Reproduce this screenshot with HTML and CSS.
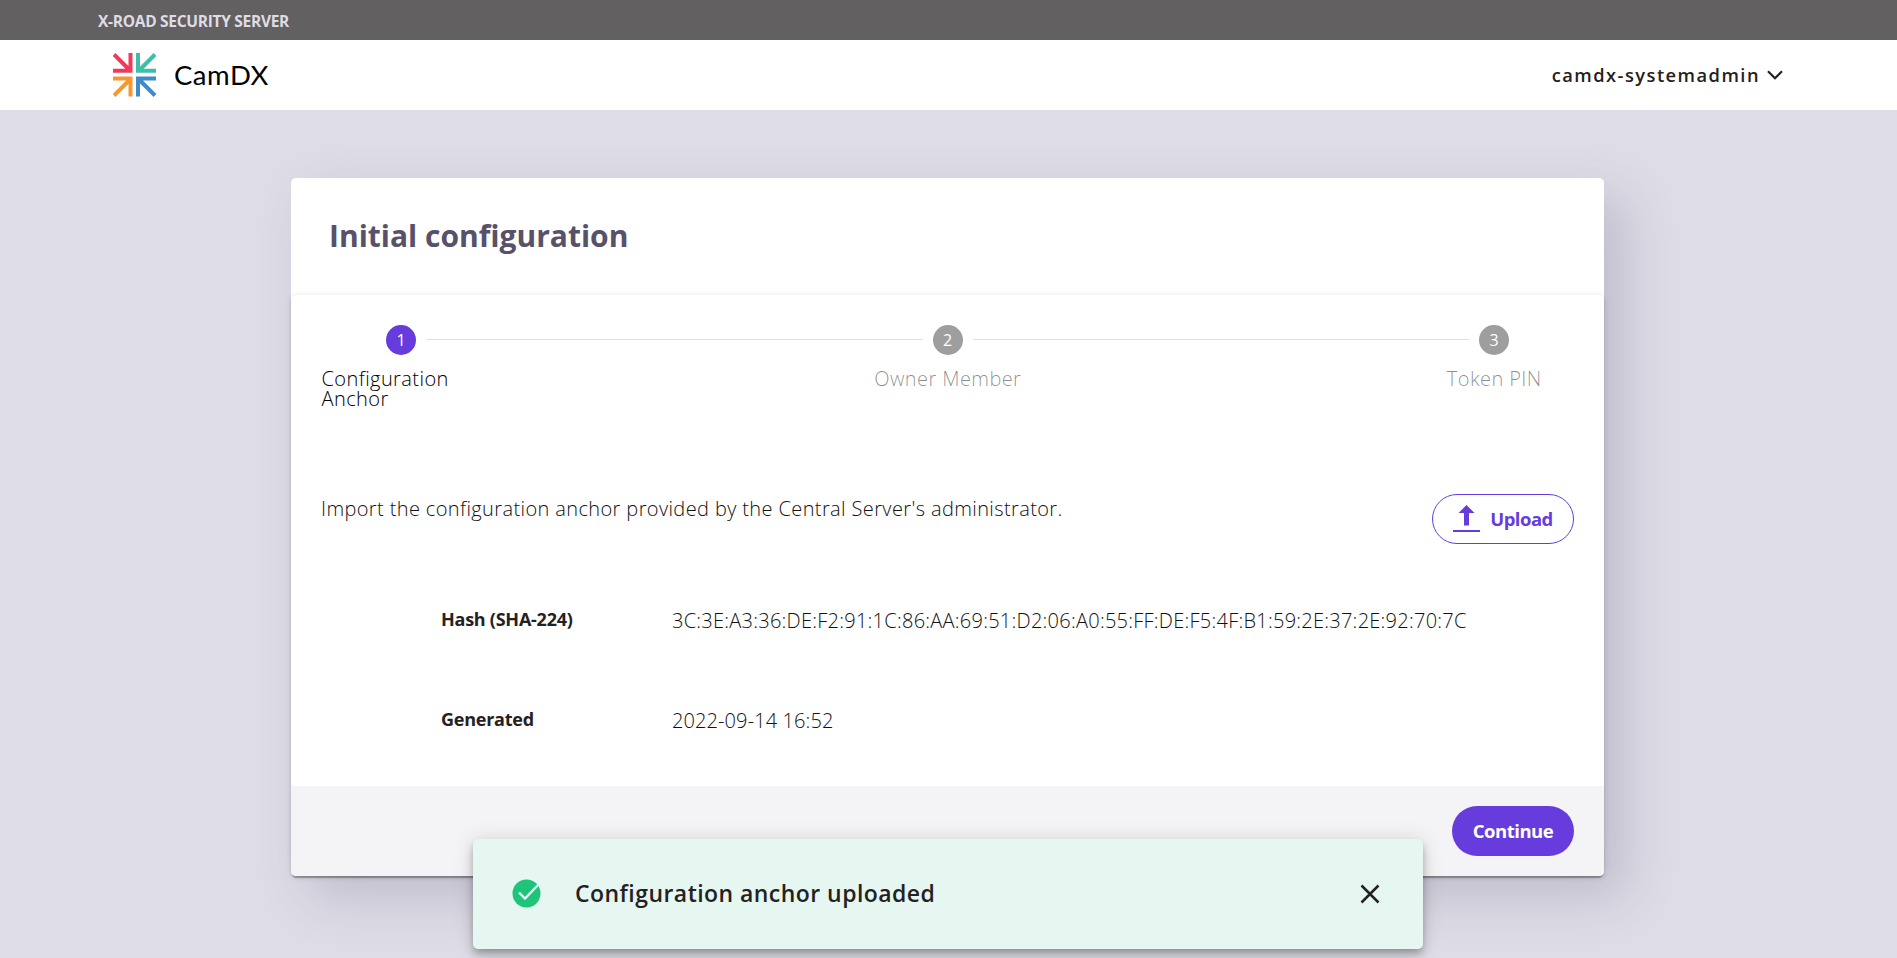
FILE: index.html
```html
<!DOCTYPE html>
<html lang="en">
<head>
<meta charset="utf-8">
<title>X-Road Security Server</title>
<link rel="stylesheet" href="styles.css">
</head>
<body>
<div class="topbar"><span class="topbar-title">X-ROAD SECURITY SERVER</span></div>
<header class="header">
  <div class="brand">
    <svg class="brand-mark" width="44" height="44" viewBox="0 0 44 44" fill="none" stroke-width="4">
      <g stroke="#ee3b5b"><path d="M1 1.500L17 17.500M17.500 0V18M0 17.800H19.500"/></g>
      <g stroke="#3bbfa8"><path d="M42 1.500L26 17.500M25 0V18M23 17.800H43"/></g>
      <g stroke="#f7982f"><path d="M1 42.500L17 26.500M17.500 43.500V26M0 25.600H19.500"/></g>
      <g stroke="#3f8acb"><path d="M42 42.500L26 26.500M25 43.500V26M23 25.600H43"/></g>
    </svg>
    <span class="brand-name">CamDX</span>
  </div>
  <div class="user">
    <span class="user-name">camdx-systemadmin</span>
    <svg width="16" height="10" viewBox="0 0 16 10" fill="none" stroke="#252121" stroke-width="2.200"><path d="M1 1.200L8 8.200L15 1.200"/></svg>
  </div>
</header>
<main class="card">
  <h1 class="card-title">Initial configuration</h1>
  <section class="stepper">
    <ol class="steps">
      <li class="step step-active"><span class="step-number">1</span><span class="step-label">Configuration Anchor</span></li>
      <li class="step-line"></li>
      <li class="step"><span class="step-number">2</span><span class="step-label">Owner Member</span></li>
      <li class="step-line"></li>
      <li class="step"><span class="step-number">3</span><span class="step-label">Token PIN</span></li>
    </ol>
    <div class="content">
      <div class="import-row">
        <p class="import-text">Import the configuration anchor provided by the Central Server's administrator.</p>
        <button class="button button-outline">
          <svg width="27" height="28" viewBox="0 0 27 28" fill="#663cdc"><path d="M13.500 0L21.500 8H16V20.500H11V8H5.500ZM0 25H27V27H0Z"/></svg>
          <span class="button-label">Upload</span>
        </button>
      </div>
      <dl class="details">
        <dt>Hash (SHA-224)</dt>
        <dd class="hash">3C:3E:A3:36:DE:F2:91:1C:86:AA:69:51:D2:06:A0:55:FF:DE:F5:4F:B1:59:2E:37:2E:92:70:7C</dd>
        <dt>Generated</dt>
        <dd>2022-09-14 16:52</dd>
      </dl>
    </div>
    <footer class="actions"><button class="button button-primary"><span class="button-label">Continue</span></button></footer>
  </section>
</main>
<div class="toast">
  <svg class="toast-icon" width="29" height="29" viewBox="0 0 29 29"><circle cx="14.500" cy="14.500" r="14" fill="#1fc47a"/><path d="M7 13.500L13 19.500L27 5" fill="none" stroke="#e6f7f1" stroke-width="2.400"/></svg>
  <span class="toast-text">Configuration anchor uploaded</span>
  <svg class="toast-close" width="20" height="20" viewBox="0 0 20 20" fill="none" stroke="#252121" stroke-width="2.500"><path d="M1.500 1.500L18.500 18.500M18.500 1.500L1.500 18.500"/></svg>
</div>
</body>
</html>
```
FILE: styles.css
```css
* { box-sizing: border-box; }
body {
  margin: 0;
  height: 958px;
  overflow: hidden;
  background: #dedce6;
  color: #252121;
  font-family: "Open Sans", sans-serif;
  font-size: 20px;
}
.topbar {
  display: flex;
  align-items: center;
  height: 40px;
  padding: 1px 0 0 98px;
  background: #636062;
}
.topbar-title {
  color: #dedce4;
  font-size: 15.500px;
  font-weight: 700;
  letter-spacing: -0.290px;
}
.header {
  display: flex;
  align-items: center;
  justify-content: space-between;
  height: 70px;
  padding: 0 114px 0 113px;
  background: #fff;
}
.brand { display: flex; align-items: center; gap: 17px; }
.brand-mark { display: block; }
.brand-name {
  padding-bottom: 2px;
  color: #000;
  font-family: Lato, sans-serif;
  font-size: 27.500px;
  letter-spacing: 0.500px;
}
.user { display: flex; align-items: center; gap: 7px; }
.user-name {
  padding-bottom: 2px;
  font-size: 18.300px;
  font-weight: 600;
  letter-spacing: 1.470px;
}
.card {
  width: 1313px;
  margin: 68px 0 0 291px;
  border-radius: 5px;
  background: #fff;
  box-shadow: 20px 20px 50px rgba(86, 79, 117, 0.22);
}
.card-title {
  display: flex;
  align-items: center;
  height: 117px;
  margin: 0;
  padding: 0 0 2px 38px;
  color: #575169;
  font-size: 30px;
  font-weight: 700;
}
.stepper {
  border-radius: 5px;
  background: #fff;
  box-shadow: 0 4px 1px -2px rgba(0, 0, 0, 0.2), 0 2px 2px rgba(0, 0, 0, 0.14), 0 1px 6px rgba(0, 0, 0, 0.12);
}
.steps {
  display: flex;
  align-items: flex-start;
  justify-content: space-between;
  height: 170px;
  margin: 0;
  padding: 30px 30px 0;
  list-style: none;
}
.step {
  display: flex;
  flex: 0 0 160px;
  flex-direction: column;
  align-items: center;
  gap: 14px;
  color: rgba(0, 0, 0, 0.45);
}
.step-number {
  display: flex;
  align-items: center;
  justify-content: center;
  width: 30px;
  height: 30px;
  border-radius: 50%;
  background: #9e9e9e;
  color: #fff;
  font-size: 16px;
}
.step-label {
  padding-left: 0.500px;
  font-weight: 300;
  letter-spacing: 0.420px;
  line-height: 20px;
}
.step-active { color: #000; }
.step-active .step-number { background: #663cdc; }
.step-line {
  flex: 1;
  height: 1px;
  margin: 14px -55px 0;
  background: #dfdfdf;
}
.content { height: 321px; padding: 29px 30px 0; }
.import-row { display: flex; align-items: flex-start; justify-content: space-between; height: 50px; }
.import-text {
  margin: 0;
  color: #111;
  font-weight: 300;
  letter-spacing: 0.380px;
  line-height: 30px;
}
.button {
  display: flex;
  align-items: center;
  justify-content: center;
  height: 50px;
  padding: 0;
  border: 0;
  border-radius: 25px;
  font-family: inherit;
  font-size: 18.500px;
  font-weight: 700;
  letter-spacing: -0.500px;
}
.button-label { padding-bottom: 2px; }
.button-outline {
  gap: 10px;
  width: 142px;
  border: 1px solid #663cdc;
  background: #fff;
  color: #663cdc;
}
.button-primary { width: 122px; background: #663cdc; color: #fff; }
.details {
  display: grid;
  grid-template-columns: 231px 1fr;
  grid-auto-rows: 100px;
  align-items: center;
  margin: 25px 0 0;
  padding-left: 120px;
}
.details dt { font-size: 18px; font-weight: 700; letter-spacing: -0.250px; }
.details dd { margin: 3px 0 0; color: #111; font-weight: 300; letter-spacing: 0.100px; }
.details .hash { letter-spacing: 0.250px; }
.actions {
  display: flex;
  align-items: center;
  justify-content: flex-end;
  height: 90px;
  padding-right: 30px;
  border-radius: 0 0 5px 5px;
  background: #f4f3f6;
}
.toast {
  position: absolute;
  top: 839px;
  left: 473px;
  display: flex;
  align-items: center;
  width: 950px;
  height: 110px;
  padding: 0 43px 1px 39px;
  border-radius: 5px;
  background: #e6f7f1;
  box-shadow: 0 4px 6px -1px rgba(0, 0, 0, 0.2), 0 7px 12px rgba(0, 0, 0, 0.14), 0 1px 22px rgba(0, 0, 0, 0.12);
}
.toast-text { margin: 0 auto 0 34px; padding-bottom: 1px; font-size: 23px; font-weight: 600; letter-spacing: 0.450px; }
```
